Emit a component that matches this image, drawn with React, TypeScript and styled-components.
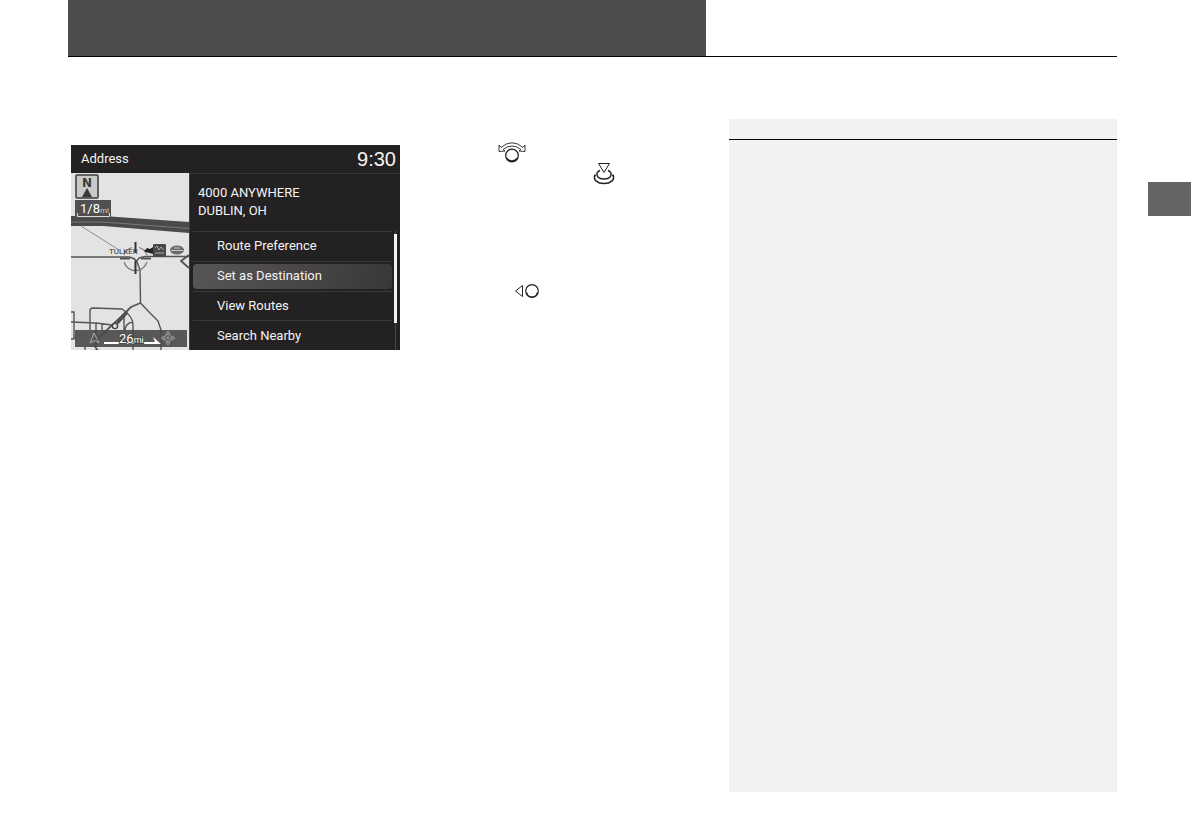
import React from "react";
import styled, { createGlobalStyle } from "styled-components";

const GlobalStyle = createGlobalStyle`
  * { box-sizing: border-box; }
  body { margin: 0; background: #fff; font-family: Roboto, "Liberation Sans", sans-serif; }
`;

const Page = styled.div`
  display: grid;
  grid-template-columns: minmax(0, 1fr) 43px;
  column-gap: 31px;
  min-height: 100vh;
  padding: 0 0 47px 68px;
`;

const Sheet = styled.main`
  display: flex;
  flex-direction: column;
`;

const Header = styled.header`
  display: grid;
  grid-template-columns: 638fr 411fr;
  height: 57px;
  border-bottom: 1px solid #000;
`;

const TitleBand = styled.div`
  background: #4d4d4d;
`;

const Columns = styled.div`
  flex: 1;
  display: grid;
  grid-template-columns: 63% 37%;
  padding-top: 62px;
`;

const Article = styled.section`
  display: flex;
  align-items: flex-start;
  gap: 98px;
  padding: 23px 0 0 3px;
`;

const Notes = styled.aside`
  background: #f2f2f2;
`;

const NotesHeading = styled.div`
  height: 21px;
  border-bottom: 1px solid #000;
`;

const Margin = styled.div`
  padding-top: 182px;
`;

const ChapterTab = styled.div`
  height: 34px;
  background: #646464;
`;

const Screen = styled.div`
  width: 329px;
  flex: none;
  margin-top: 3px;
  background: #242122;
  color: #f4f4f4;
  font-size: 13px;
  line-height: 18px;
`;

const StatusBar = styled.div`
  display: flex;
  align-items: center;
  justify-content: space-between;
  height: 28px;
  padding: 0 4px 0 10px;
`;

const Clock = styled.time`
  font-family: "Liberation Sans", Arial, sans-serif;
  font-size: 20px;
  line-height: 28px;
`;

const Body = styled.div`
  display: grid;
  grid-template-columns: 118px 1fr;
  height: 177px;
`;

const Panel = styled.div`
  display: flex;
  flex-direction: column;
  border-top: 1px solid #393738;
  border-left: 1px solid #3f3d3e;
`;

const Address = styled.div`
  height: 57px;
  padding: 10px 0 0 8px;
`;

const MenuArea = styled.div`
  flex: 1;
  display: grid;
  grid-template-columns: 1fr 3px;
  column-gap: 2px;
  padding: 0 3px;
`;

const Menu = styled.ul`
  display: flex;
  flex-direction: column;
  margin: 0;
  padding: 0;
  list-style: none;
`;

const MenuRow = styled.li`
  flex: 1;
  display: flex;
  padding: 2px 0;
  border-top: 1px solid #3b393a;
`;

const MenuButton = styled.button<{ $active?: boolean }>`
  flex: 1;
  padding: 0 0 0 24px;
  border: 0;
  border-radius: 4px;
  background: ${(p) => (p.$active ? "linear-gradient(100deg, #575556, #434142 70%, #393738)" : "transparent")};
  color: inherit;
  font: inherit;
  text-align: left;
`;

const ScrollTrack = styled.div`
  padding-top: 3px;
  background: linear-gradient(#4a4849, #4a4849) center / 1px 100% no-repeat;
`;

const ScrollThumb = styled.div`
  height: 89px;
  background: #f2f2f2;
`;

const Controls = styled.div`
  display: flex;
  flex-direction: column;
`;

const Knob = styled.svg<{ $indent: number; $above?: number }>`
  display: block;
  margin: ${(p) => p.$above ?? 0}px 0 0 ${(p) => p.$indent}px;
`;

const MapDrawing = styled.svg`
  display: block;
`;

const MapView = () => (
  <MapDrawing width="118" height="177" viewBox="0 0 118 177" role="img" aria-label="Map">
    <rect width="118" height="177" fill="#e3e3e3" />
    <path d="M0 43H32L118 49V60L32 53H0Z" fill="#4a4a4a" />
    <path d="M0 49H32L118 55.500" stroke="#777" fill="none" />
    <path d="M10 53L48 77" stroke="#777" strokeWidth=".8" />
    <g fill="none" stroke="#555" strokeWidth="1.4" strokeLinejoin="round">
      <path d="M0 84H58Q64 85 66 89L69 97L69.500 130L79 140L87 148L90 157V177M65 89L68 85L74 83.500H118" />
      <path d="M69.500 130L60 134L52 142L24 168" strokeWidth="1.800" />
      <path d="M19 157V138Q19 135 22 135L51 136Q62 143 62 152V177M0 149L25 150L41 152M25 150V177M31 151V158M53 143V158M62 149Q54 150 54 158M0 139H3V166H0M3 165H5M22 172L27 177M14 174V177" />
      <path d="M118 82L110 88L118 95" strokeWidth="2" />
    </g>
    <path d="M46 150L56 139" stroke="#505050" strokeWidth="3.500" />
    <circle cx="44" cy="153" r="2.600" fill="#e3e3e3" stroke="#444" strokeWidth="1.400" />
    <g fill="none" stroke="#777" strokeWidth="1.200">
      <path d="M53 82A12 12 0 0 1 61 74.500M68 74.500A12 12 0 0 1 76 82M53 89A12 12 0 0 0 76 89" />
      <path d="M49 85.500H59M70 85.500H80" stroke="#555" strokeWidth="2" />
      <path d="M64.500 69V80M64.500 88V101" stroke="#333" strokeWidth="2" />
    </g>
    <text x="38" y="81" fontSize="8" fill="#333">TULKER</text>
    <path d="M73 78L76 75L79 76L82 74V81L75 79Z" fill="#222" />
    <rect x="82" y="71" width="13" height="13" rx="1" fill="#484848" />
    <path d="M84 75L86 73L88 77L90 74L93 77M84 80H93" stroke="#aaa" fill="none" />
    <ellipse cx="106" cy="77" rx="7" ry="4.500" fill="#6a6a6a" />
    <path d="M100 77.500H112M103 75H109" stroke="#c8c8c8" strokeWidth="1.200" />
    <rect x="5" y="2" width="22" height="23" rx="1" fill="#c9c9c9" stroke="#3a3a3a" strokeWidth="1.500" />
    <text x="11" y="14" fontSize="12" fontWeight="700" fontFamily="DejaVu Sans, sans-serif" fill="#3a3a3a">N</text>
    <path d="M16 15L21 24H11Z" fill="#3a3a3a" />
    <rect x="4" y="27" width="36" height="18" fill="#505050" />
    <text x="9" y="40" fontSize="13" fill="#fff">1/8<tspan fontSize="8" fill="#ccc">mi</tspan></text>
    <path d="M6.500 40V43.500H38.500V40" fill="none" stroke="#ddd" />
    <rect x="4" y="157" width="112" height="17" fill="#484848" fillOpacity=".9" />
    <path d="M23 160L28 170L24 167.500L19 170Z" fill="none" stroke="#aaa" />
    <path d="M33 169H84L82 164L90 171H33Z" fill="#fff" />
    <text x="48" y="170" fontSize="13" fill="#fff" stroke="#484848" strokeWidth="2" paintOrder="stroke">26<tspan fontSize="9">mi</tspan></text>
    <g fill="none" stroke="#999">
      <circle cx="97" cy="165" r="3.500" />
      <path d="M97 158L99 161H95ZM97 172L99 169H95ZM90 165L93 163V167ZM104 165L101 163V167ZM97 163V167M95 165H99" />
    </g>
  </MapDrawing>
);

const items = ["Route Preference", "Set as Destination", "View Routes", "Search Nearby"];

export default function App() {
  return (
    <>
      <GlobalStyle />
      <Page>
        <Sheet>
          <Header>
            <TitleBand />
          </Header>
          <Columns>
            <Article>
              <Screen>
                <StatusBar>
                  <span>Address</span>
                  <Clock>9:30</Clock>
                </StatusBar>
                <Body>
                  <MapView />
                  <Panel>
                    <Address>
                      4000 ANYWHERE
                      <br />
                      DUBLIN, OH
                    </Address>
                    <MenuArea>
                      <Menu>
                        {items.map((item, i) => (
                          <MenuRow key={item}>
                            <MenuButton type="button" $active={i === 1}>
                              {item}
                            </MenuButton>
                          </MenuRow>
                        ))}
                      </Menu>
                      <ScrollTrack>
                        <ScrollThumb />
                      </ScrollTrack>
                    </MenuArea>
                  </Panel>
                </Body>
              </Screen>
              <Controls>
                <Knob $indent={0} width="28" height="21" viewBox="0 0 28 21" fill="none" stroke="#222">
                  <path d="M3 5.500Q14 -4 25 5.500L27 3V9.500L21 9L23 7.500Q14 .5 5 7.500L7 9L1 9.500V3Z" strokeWidth=".9" />
                  <circle cx="14" cy="13.500" r="6.300" strokeWidth="1.300" />
                  <path d="M8.500 16A6.200 5.500 0 0 0 19.500 16" strokeWidth="1.500" />
                </Knob>
                <Knob $indent={95} width="22" height="22" viewBox="0 0 22 22" fill="none" stroke="#222">
                  <path d="M2.500 11.500C-1 17 5 20.500 11 20.500S23 17 19.500 11.500" strokeWidth="1.500" />
                  <path d="M7 7.500C2 9.500 3 16 11 16S20 9.500 15 7.500" strokeWidth="1.400" />
                  <path d="M5.500 .5H16.500L11 9.500Z" />
                </Knob>
                <Knob $indent={17} $above={98} width="26" height="16" viewBox="0 0 26 16" fill="none" stroke="#222">
                  <path d="M7.500 2.500V13.500L.5 8Z" />
                  <circle cx="17" cy="8" r="6.300" strokeWidth="1.200" />
                  <path d="M12 9.500A5 4.500 0 0 0 22 9.500" />
                </Knob>
              </Controls>
            </Article>
            <Notes>
              <NotesHeading />
            </Notes>
          </Columns>
        </Sheet>
        <Margin>
          <ChapterTab />
        </Margin>
      </Page>
    </>
  );
}
